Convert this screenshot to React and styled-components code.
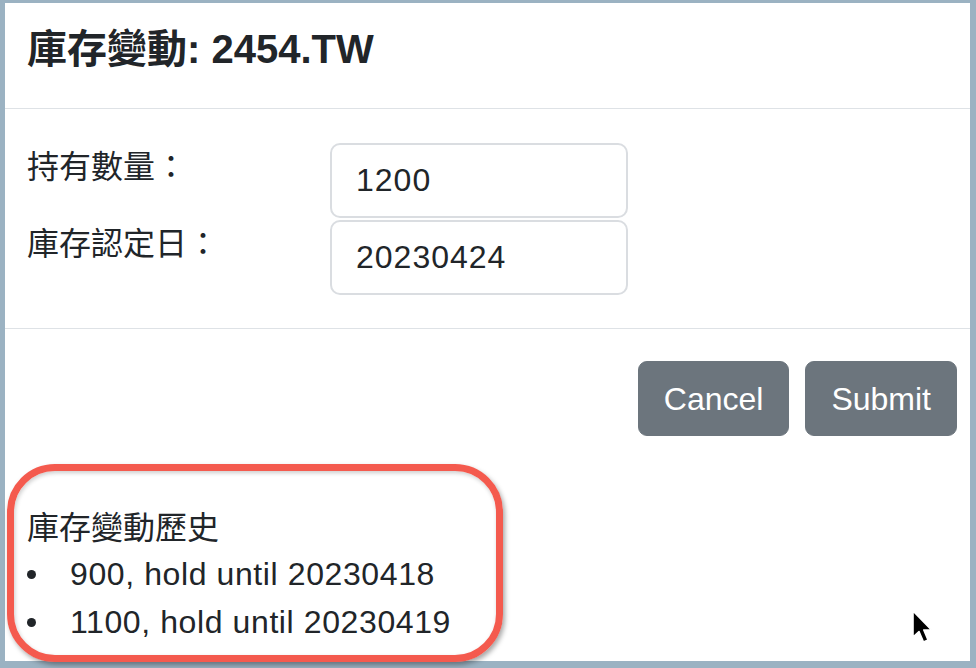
import React from "react";
import styled, { createGlobalStyle } from "styled-components";

const GlobalStyle = createGlobalStyle`
  html, body {
    margin: 0;
    padding: 0;
  }
  body {
    font-family: "Liberation Sans", "Noto Sans CJK TC", sans-serif;
    color: #212529;
  }
  * {
    box-sizing: border-box;
  }
`;

const Frame = styled.div`
  width: 976px;
  height: 668px;
  padding: 3px 6px 7px 5px;
  background: #9bb2c2;
  position: relative;
  overflow: hidden;
`;

const Modal = styled.div`
  height: 100%;
  background: #fff;
  display: flex;
  flex-direction: column;
  position: relative;
`;

const Header = styled.div`
  padding: 22px 22px 35px;
  border-bottom: 1px solid #dee2e6;
`;

const Title = styled.h5`
  margin: 0;
  font-size: 40px;
  line-height: 48px;
  font-weight: 600;
`;

const Body = styled.div`
  padding: 34px 22px 33px;
  border-bottom: 1px solid #dee2e6;
  display: flex;
  flex-direction: column;
  gap: 2px;
`;

const Row = styled.div`
  display: grid;
  grid-template-columns: 303px 298px;
  align-items: start;
`;

const Label = styled.label`
  font-size: 32px;
  line-height: 48px;
`;

const Input = styled.input`
  height: 75px;
  width: 298px;
  padding: 12px 24px;
  font-family: inherit;
  font-size: 32px;
  line-height: 48px;
  letter-spacing: 1px;
  color: #212529;
  border: 2px solid #dadde1;
  border-radius: 10px;
  outline: none;
  background: #fff;
`;

const Footer = styled.div`
  display: flex;
  justify-content: flex-end;
  gap: 16px;
  padding: 32px 13px 20px;
`;

const Button = styled.button`
  height: 75px;
  padding: 12px 25px;
  font-family: inherit;
  font-size: 32px;
  line-height: 48px;
  color: #fff;
  background: #6c757d;
  border: 1px solid #6c757d;
  border-radius: 9px;
`;

const History = styled.div`
  padding: 48px 22px 0;
  font-size: 32px;
  line-height: 48px;
`;

const HistoryTitle = styled.div`
  height: 46px;
`;

const List = styled.ul`
  margin: 0;
  padding: 0;
  list-style: none;
`;

const Item = styled.li`
  display: flex;
  align-items: center;
  height: 48px;
  letter-spacing: 0.6px;
`;

const Bullet = styled.span`
  width: 43px;
  flex-shrink: 0;
  display: flex;
  align-items: center;

  &:before {
    content: "";
    width: 9px;
    height: 9px;
    border-radius: 50%;
    background: #212529;
  }
`;

const Highlight = styled.div`
  position: absolute;
  left: 2px;
  top: 461px;
  width: 496px;
  height: 198px;
  border: 7px solid #f45a4e;
  border-radius: 48px;
  box-shadow: 2px 3px 5px rgba(0, 0, 0, 0.35), inset 1px 2px 4px rgba(0, 0, 0, 0.2);
  pointer-events: none;
`;

const Cursor = styled.svg`
  position: absolute;
  left: 906px;
  top: 607px;
`;

const history = [
  { qty: 900, date: "20230418" },
  { qty: 1100, date: "20230419" },
];

export default function App() {
  return (
    <>
      <GlobalStyle />
      <Frame>
        <Modal>
          <Header>
            <Title>庫存變動: 2454.TW</Title>
          </Header>
          <Body>
            <Row>
              <Label>持有數量：</Label>
              <Input defaultValue="1200" />
            </Row>
            <Row>
              <Label>庫存認定日：</Label>
              <Input defaultValue="20230424" />
            </Row>
          </Body>
          <Footer>
            <Button>Cancel</Button>
            <Button>Submit</Button>
          </Footer>
          <History>
            <HistoryTitle>庫存變動歷史</HistoryTitle>
            <List>
              {history.map((h) => (
                <Item key={h.date}>
                  <Bullet />
                  {h.qty}, hold until {h.date}
                </Item>
              ))}
            </List>
          </History>
          <Highlight />
          <Cursor width="24" height="36" viewBox="0 0 24 36">
            <path
              d="M2 1 L2 27 L8 21.5 L12.5 32 L17 30 L12.8 20 L20.5 20 Z"
              fill="#000"
              stroke="#fff"
              strokeWidth="1.6"
              strokeLinejoin="round"
            />
          </Cursor>
        </Modal>
      </Frame>
    </>
  );
}
